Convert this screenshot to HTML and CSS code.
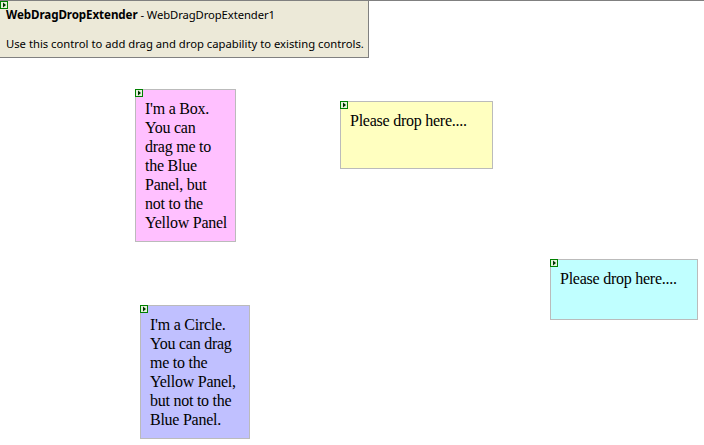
FILE: index.html
```html
<!DOCTYPE html>
<html lang="en">
<head>
<meta charset="utf-8">
<title>WebDragDropExtender</title>
<link rel="stylesheet" href="styles.css">
</head>
<body>
<div class="canvas">
  <div class="tip">
    <svg class="glyph glyph-tip" viewBox="0 0 8 8" aria-hidden="true"><rect x="0.5" y="0.5" width="7" height="7" fill="#e6f2dc" stroke="#008000"/><path d="M3 1.5 L6 4 L3 6.5 Z" fill="#030"/></svg>
    <p class="tip-title"><b>WebDragDropExtender</b> - WebDragDropExtender1</p>
    <p class="tip-desc">Use this control to add drag and drop capability to existing controls.</p>
  </div>
  <div class="panel pink">
    <svg class="glyph" viewBox="0 0 8 8" aria-hidden="true"><rect x="0.5" y="0.5" width="7" height="7" fill="#e6f2dc" stroke="#008000"/><path d="M3 1.5 L6 4 L3 6.5 Z" fill="#030"/></svg>
    I'm a Box.<br>You can<br>drag me to<br>the Blue<br>Panel, but<br>not to the<br>Yellow Panel
  </div>
  <div class="panel yellow">
    <svg class="glyph" viewBox="0 0 8 8" aria-hidden="true"><rect x="0.5" y="0.5" width="7" height="7" fill="#e6f2dc" stroke="#008000"/><path d="M3 1.5 L6 4 L3 6.5 Z" fill="#030"/></svg>
    Please drop here....
  </div>
  <div class="panel cyan">
    <svg class="glyph" viewBox="0 0 8 8" aria-hidden="true"><rect x="0.5" y="0.5" width="7" height="7" fill="#e6f2dc" stroke="#008000"/><path d="M3 1.5 L6 4 L3 6.5 Z" fill="#030"/></svg>
    Please drop here....
  </div>
  <div class="panel blue">
    <svg class="glyph" viewBox="0 0 8 8" aria-hidden="true"><rect x="0.5" y="0.5" width="7" height="7" fill="#e6f2dc" stroke="#008000"/><path d="M3 1.5 L6 4 L3 6.5 Z" fill="#030"/></svg>
    I'm a Circle.<br>You can drag<br>me to the<br>Yellow Panel,<br>but not to the<br>Blue Panel.
  </div>
</div>
</body>
</html>
```
FILE: styles.css
```css
html, body {
  margin: 0;
  padding: 0;
  background: #fff;
}
.canvas {
  position: relative;
  width: 704px;
  height: 445px;
  overflow: hidden;
  border-top: 1px solid #808080;
  box-sizing: border-box;
}
.tip {
  position: absolute;
  left: 0;
  top: 0;
  width: 369px;
  height: 57px;
  box-sizing: border-box;
  background: #ece9d8;
  border-right: 1px solid #808080;
  border-bottom: 1px solid #808080;
  padding: 6px 0 0 6px;
  font: 11.25px/16px "Noto Sans", sans-serif;
  color: #000;
}
.tip b {
  font-size: 11.6px;
}
.tip p {
  margin: 0;
  white-space: nowrap;
}
.tip-title {
  letter-spacing: -0.08px;
}
.tip-desc {
  padding-top: 13px;
}
.panel {
  position: absolute;
  box-sizing: border-box;
  border: 1px solid #bbb;
  padding: 9px 9px 0;
  font: 16px/19px "Liberation Serif", serif;
  letter-spacing: -0.25px;
  color: #000;
  white-space: nowrap;
}
.glyph {
  position: absolute;
  left: -1px;
  top: -1px;
  width: 8px;
  height: 8px;
  display: block;
}
.glyph-tip {
  left: 0;
  top: 0;
}
.pink { left: 135px; top: 88px; width: 101px; height: 153px; background: #ffc0ff; }
.yellow { left: 340px; top: 100px; width: 153px; height: 68px; background: #ffffc0; }
.cyan { left: 550px; top: 258px; width: 148px; height: 61px; background: #c0ffff; }
.blue { left: 140px; top: 304px; width: 110px; height: 134px; background: #c0c0ff; }
```
